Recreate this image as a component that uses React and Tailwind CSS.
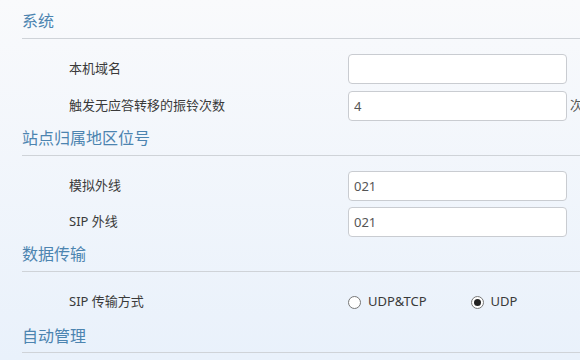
import { useState } from 'react';

const font = { fontFamily: '"Noto Sans", "Noto Sans CJK SC", sans-serif' };

function Heading({ title, first }) {
  return (
    <div
      className={`flex items-end border-b border-[#cfd3d8] pb-[7px] text-[16px] leading-[20px] text-[#4c84b0] ${
        first ? 'h-[39px]' : 'h-[35px]'
      }`}
    >
      {title}
    </div>
  );
}

function Row({ label, children }) {
  return (
    <div className="flex h-[30px] items-center">
      <div className="w-[326px] pl-[47px] text-[13px] text-[#3a3a3a]">{label}</div>
      {children}
    </div>
  );
}

function TextInput({ value, suffix }) {
  return (
    <div className="flex items-center">
      <input
        readOnly
        value={value}
        className="h-[30px] w-[219px] rounded-[4px] border border-[#c9ccd1] bg-white px-[5px] text-[13px] text-[#555] outline-none"
        style={font}
      />
      {suffix && <span className="ml-[3px] text-[13px] text-[#555]">{suffix}</span>}
    </div>
  );
}

function Radio({ checked, label, onClick }) {
  return (
    <button type="button" onClick={onClick} className="flex items-center gap-[7px] text-[13px] text-[#3a3a3a]">
      <span className="flex h-[13px] w-[13px] items-center justify-center rounded-full border border-[#777] bg-white">
        {checked && <span className="h-[7px] w-[7px] rounded-full bg-[#222]" />}
      </span>
      {label}
    </button>
  );
}

export default function App() {
  const [proto, setProto] = useState('udp');

  return (
    <div
      className="h-[360px] w-[580px] overflow-hidden bg-gradient-to-b from-[#f9fafc] to-[#e9f1fb] pl-[22px]"
      style={font}
    >
      <div className="w-[600px]">
        <Heading title="系统" first />
        <div className="flex flex-col gap-[7px] pt-[15px]">
          <Row label="本机域名">
            <TextInput value="" />
          </Row>
          <Row label="触发无应答转移的振铃次数">
            <TextInput value="4" suffix="次" />
          </Row>
        </div>

        <Heading title="站点归属地区位号" />
        <div className="flex flex-col gap-[6px] pt-[15px]">
          <Row label="模拟外线">
            <TextInput value="021" />
          </Row>
          <Row label="SIP 外线">
            <TextInput value="021" />
          </Row>
        </div>

        <Heading title="数据传输" />
        <div className="pt-[15px]">
          <Row label="SIP 传输方式">
            <div className="flex items-center gap-[44px]">
              <Radio label="UDP&TCP" checked={proto === 'both'} onClick={() => setProto('both')} />
              <Radio label="UDP" checked={proto === 'udp'} onClick={() => setProto('udp')} />
            </div>
          </Row>
        </div>

        <div className="h-[36px] border-b border-[#cfd3d8] pt-[9px] text-[16px] leading-[20px] text-[#4c84b0]">
          自动管理
        </div>
      </div>
    </div>
  );
}
